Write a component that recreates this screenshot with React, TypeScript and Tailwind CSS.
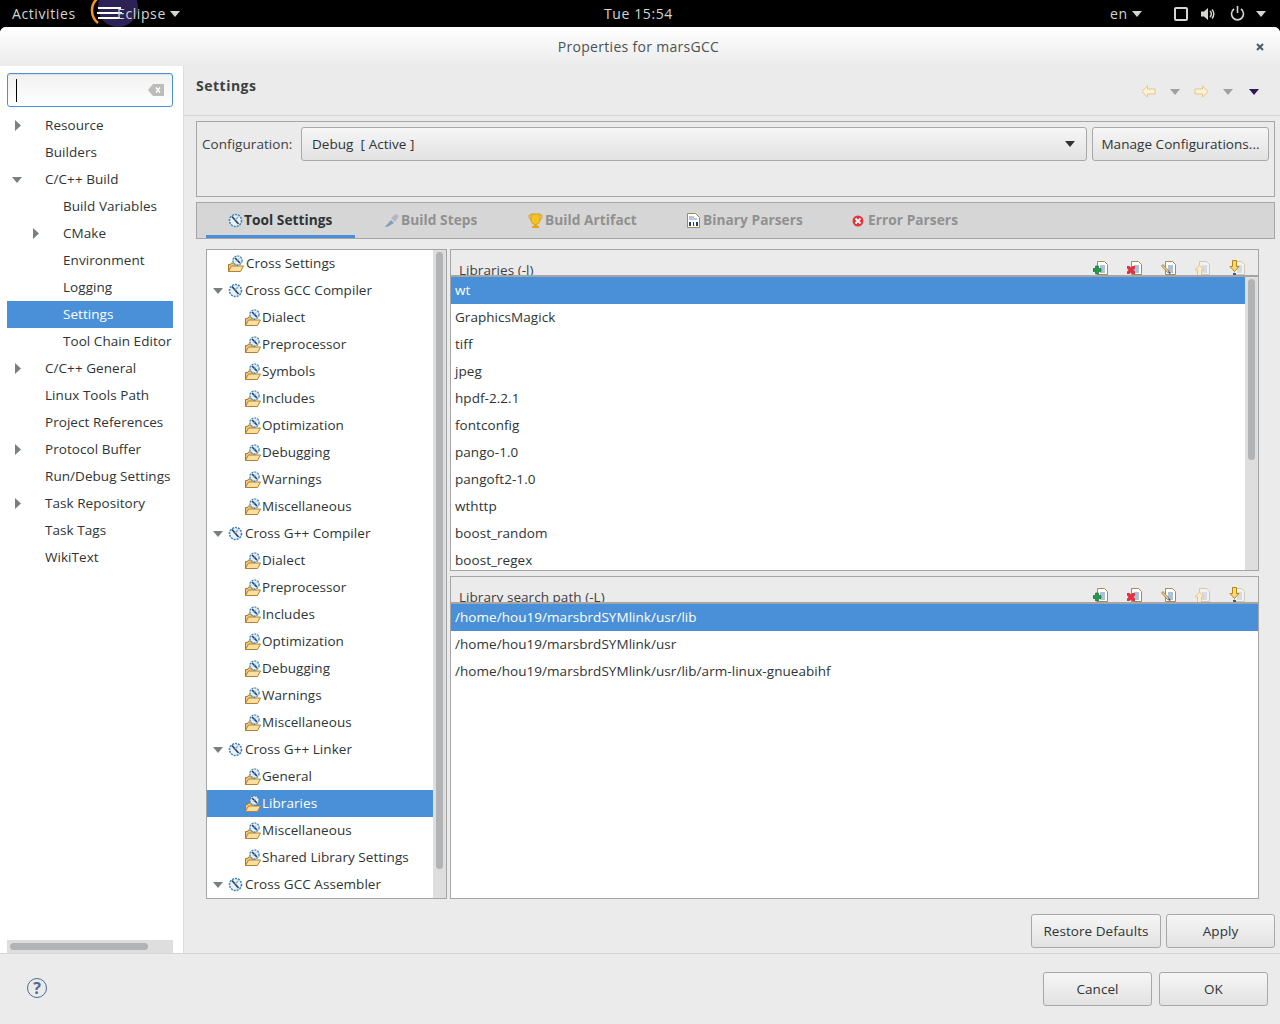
import React from 'react';

const sidebarItems = [
  { label: 'Resource', depth: 0, arrow: 'right' },
  { label: 'Builders', depth: 0 },
  { label: 'C/C++ Build', depth: 0, arrow: 'down' },
  { label: 'Build Variables', depth: 1 },
  { label: 'CMake', depth: 1, arrow: 'right' },
  { label: 'Environment', depth: 1 },
  { label: 'Logging', depth: 1 },
  { label: 'Settings', depth: 1, selected: true },
  { label: 'Tool Chain Editor', depth: 1 },
  { label: 'C/C++ General', depth: 0, arrow: 'right' },
  { label: 'Linux Tools Path', depth: 0 },
  { label: 'Project References', depth: 0 },
  { label: 'Protocol Buffer', depth: 0, arrow: 'right' },
  { label: 'Run/Debug Settings', depth: 0 },
  { label: 'Task Repository', depth: 0, arrow: 'right' },
  { label: 'Task Tags', depth: 0 },
  { label: 'WikiText', depth: 0 },
];

const toolItems = [
  { label: 'Cross Settings', depth: 0, folder: true },
  { label: 'Cross GCC Compiler', depth: 0 },
  { label: 'Dialect', depth: 1 },
  { label: 'Preprocessor', depth: 1 },
  { label: 'Symbols', depth: 1 },
  { label: 'Includes', depth: 1 },
  { label: 'Optimization', depth: 1 },
  { label: 'Debugging', depth: 1 },
  { label: 'Warnings', depth: 1 },
  { label: 'Miscellaneous', depth: 1 },
  { label: 'Cross G++ Compiler', depth: 0 },
  { label: 'Dialect', depth: 1 },
  { label: 'Preprocessor', depth: 1 },
  { label: 'Includes', depth: 1 },
  { label: 'Optimization', depth: 1 },
  { label: 'Debugging', depth: 1 },
  { label: 'Warnings', depth: 1 },
  { label: 'Miscellaneous', depth: 1 },
  { label: 'Cross G++ Linker', depth: 0 },
  { label: 'General', depth: 1 },
  { label: 'Libraries', depth: 1, selected: true },
  { label: 'Miscellaneous', depth: 1 },
  { label: 'Shared Library Settings', depth: 1 },
  { label: 'Cross GCC Assembler', depth: 0 },
];

const libraries = ['wt', 'GraphicsMagick', 'tiff', 'jpeg', 'hpdf-2.2.1', 'fontconfig', 'pango-1.0', 'pangoft2-1.0', 'wthttp', 'boost_random', 'boost_regex'];
const searchPaths = ['/home/hou19/marsbrdSYMlink/usr/lib', '/home/hou19/marsbrdSYMlink/usr', '/home/hou19/marsbrdSYMlink/usr/lib/arm-linux-gnueabihf'];

const Caret = ({ dir, className = '' }: { dir: 'right' | 'down'; className?: string }) =>
  dir === 'right' ? (
    <svg width="6" height="11" viewBox="0 0 6 11" className={className}><path d="M0 0l6 5.500L0 11z" fill="#7a7f80" /></svg>
  ) : (
    <svg width="10" height="6" viewBox="0 0 10 6" className={className}><path d="M0 0h10L5 6z" fill="#7a7f80" /></svg>
  );

const Gear = () => (
  <svg width="15" height="15" viewBox="0 0 15 15">
    <circle cx="7.500" cy="7.500" r="6" fill="#eaf2f8" stroke="#3f86b4" strokeWidth="1.600" strokeDasharray="2 1" />
    <path d="M4 3.500l6.500 7.500" stroke="#25406b" strokeWidth="1.700" />
    <path d="M10 4L7 7" stroke="#8aa9c4" strokeWidth="1.400" />
  </svg>
);

const FolderGear = () => (
  <svg width="16" height="17" viewBox="0 0 16 17">
    <path d="M.5 9.500h2l1-1.500h6v8.500H.5z" fill="#f0c67c" stroke="#a8742a" />
    <path d="M.5 16.500l3-5.500h12l-3 5.500z" fill="#fbdf9f" stroke="#b5802f" />
    <circle cx="9.500" cy="5.500" r="4.600" fill="#e4eef6" stroke="#3f86b4" strokeWidth="1.300" strokeDasharray="2 1" />
    <path d="M7 3l5 5" stroke="#25406b" strokeWidth="1.600" />
    <path d="M8 6.500l3-3" stroke="#8aa9c4" />
  </svg>
);

const DocBase = ({ faded = false }: { faded?: boolean }) => (
  <g opacity={faded ? 0.35 : 1}>
    <path d="M4.500 1.500h7l3 3v10h-10z" fill="#fff" stroke="#a68a4e" />
    <path d="M7 6h5M7 8h5M7 10h5M7 12h5" stroke="#5b83b5" />
  </g>
);

const AddDoc = () => (
  <svg width="16" height="16" viewBox="0 0 16 16">
    <DocBase />
    <path d="M2.500 6h3v2.500H8v3H5.500V14h-3v-2.500H0v-3h2.500z" fill="#1f9a45" stroke="#0f6a2c" strokeWidth=".6" />
  </svg>
);

const DeleteDoc = () => (
  <svg width="16" height="16" viewBox="0 0 16 16">
    <DocBase />
    <path d="M0 6h2.500L4 7.500 5.500 6H8v2.500L6.500 10 8 11.500V14H5.500L4 12.500 2.500 14H0v-2.500L1.500 10 0 8.500z" fill="#e2323f" />
  </svg>
);

const EditDoc = () => (
  <svg width="16" height="16" viewBox="0 0 16 16">
    <DocBase />
    <path d="M.500 6l1.500-1.500 6 6.500-1.500 1.500z" fill="#e9c98a" stroke="#8a6a35" strokeWidth=".7" />
    <path d="M7 13l2-1.500.5 2.500z" fill="#1f3f78" />
  </svg>
);

const UpDoc = () => (
  <svg width="16" height="16" viewBox="0 0 16 16">
    <DocBase faded />
    <path d="M4.500 5l4.500 5H6.500v6h-4v-6H0z" fill="#fdeccb" stroke="#e8c48a" />
  </svg>
);

const DownDoc = () => (
  <svg width="16" height="16" viewBox="0 0 16 16">
    <g transform="translate(1 0)"><DocBase faded /></g>
    <path d="M3.500.500h4v6H10l-4.500 5-4.500-5h2.500z" fill="#fbd96e" stroke="#b5851c" />
    <path d="M4 13h3v3H4z" fill="#2f5f9a" />
  </svg>
);

const listTools = [AddDoc, DeleteDoc, EditDoc, UpDoc, DownDoc];

const NavArrow = ({ flip = false }: { flip?: boolean }) => (
  <svg width="15" height="13" viewBox="0 0 15 13" className={flip ? '-scale-x-100' : ''}>
    <path d="M.8 6.500L6.500 1v3h7.500v5H6.500v3z" fill="#fdf2d8" stroke="#e4c488" />
  </svg>
);

const Button = ({ children, className = '' }: { children: React.ReactNode; className?: string }) => (
  <div className={`flex items-center justify-center rounded-[3px] border border-[#a8a8a8] bg-gradient-to-b from-[#f6f6f6] to-[#e2e2e2] text-[#2e3436] ${className}`}>
    {children}
  </div>
);

const ListToolbar = () => (
  <div className="flex items-center gap-[18px] pr-[13px]">
    {listTools.map((Tool, i) => (
      <Tool key={i} />
    ))}
  </div>
);

const Tab = ({ icon, label, active = false, className = '' }: { icon: React.ReactNode; label: string; active?: boolean; className?: string }) => (
  <div className={`flex h-full items-center border-b-[3px] pt-[3px] text-[13.7px] font-bold ${active ? 'border-[#4a90d9] text-[#2e3436]' : 'border-transparent text-[#8f9191]'} ${className}`}>
    {icon}
    <span>{label}</span>
  </div>
);

export default function App() {
  return (
    <div className="flex h-[1024px] w-[1280px] flex-col overflow-hidden bg-black font-['Open_Sans',sans-serif] text-[13.5px] tracking-[0.05px] text-[#2e3436]">
      {/* shell bar */}
      <div className="relative flex h-[27px] shrink-0 items-center text-[14px] font-medium tracking-[0.6px] text-[#d3d7cf]">
        <span className="ml-[12px] w-[80px]">Activities</span>
        <div className="absolute left-[90px] top-0 h-[27px] w-[50px] overflow-hidden">
          <svg width="50" height="27" viewBox="0 0 50 27">
            <circle cx="28" cy="7" r="20" fill="#2c2255" />
            <path d="M8 -2A16 16 0 0 0 8 23" stroke="#f7941e" strokeWidth="2.500" fill="none" />
            <path d="M8 8h23M7 13h25M8 18h22" stroke="#fff" strokeWidth="1.800" />
          </svg>
        </div>
        <span className="relative ml-[25px] w-[46px] whitespace-nowrap">Eclipse</span>
        <Caret dir="down" className="relative ml-[7px] [&_path]:fill-[#d3d7cf]" />
        <span className="ml-[424px] w-[506px]">Tue 15:54</span>
        <span className="w-[22px]">en</span>
        <Caret dir="down" className="[&_path]:fill-[#d3d7cf]" />
        <div className="ml-[32px] h-[14px] w-[14px] rounded-[2px] border-2 border-[#d3d7cf]" />
        <svg width="16" height="14" viewBox="0 0 16 14" className="ml-[13px]">
          <path d="M0 4.500h3L7 1v12L3 9.500H0z" fill="#d3d7cf" />
          <path d="M9 4a4 4 0 0 1 0 6M11 2.500a6.500 6.500 0 0 1 0 9" stroke="#d3d7cf" strokeWidth="1.500" fill="none" />
        </svg>
        <svg width="15" height="15" viewBox="0 0 15 15" className="ml-[13px]">
          <path d="M4 3a6 6 0 1 0 7 0" stroke="#d3d7cf" strokeWidth="1.600" fill="none" />
          <path d="M7.500 0v7" stroke="#d3d7cf" strokeWidth="1.600" />
        </svg>
        <Caret dir="down" className="ml-[11px] [&_path]:fill-[#d3d7cf]" />
      </div>

      {/* dialog window */}
      <div className="flex flex-1 flex-col overflow-hidden rounded-t-[6px] bg-[#ebebeb]">
        <div className="flex h-[39px] shrink-0 items-center bg-gradient-to-b from-white to-[#ebebeb]">
          <div className="flex-1 pl-[21px] text-center text-[14px] font-medium tracking-[0.3px] text-[#4a5254]">Properties for marsGCC</div>
          <svg width="8" height="8" viewBox="0 0 8 8" className="mr-[16px]"><path d="M1 1l6 6M7 1L1 7" stroke="#4f5b62" strokeWidth="2" /></svg>
        </div>

        <div className="flex min-h-0 flex-1">
          {/* left navigation */}
          <div className="flex w-[184px] shrink-0 flex-col border-r border-[#dcdcdc] bg-white pl-[7px] pr-[10px] pt-[7px]">
            <div className="flex h-[34px] shrink-0 items-center rounded-[3px] border border-[#4a90d9] bg-gradient-to-b from-[#f1f1f1] to-white pl-[8px] pr-[8px] shadow-[inset_0_1px_1px_rgba(0,0,0,0.08)]">
              <div className="h-[23px] w-px bg-black" />
              <svg width="16" height="12" viewBox="0 0 16 12" className="ml-auto">
                <path d="M0 6l5-6h11v12H5z" fill="#bcbcb8" />
                <path d="M8 3.500l4 5M12 3.500l-4 5" stroke="#fff" strokeWidth="1.500" />
              </svg>
            </div>
            <div className="mt-[5px] min-h-0 w-[168px] flex-1 overflow-hidden">
              {sidebarItems.map((item) => (
                <div key={item.label} className={`flex h-[27px] items-center whitespace-nowrap ${item.selected ? 'w-[166px] bg-[#4a90d9] text-white' : ''}`}>
                  <div className={`flex shrink-0 items-center ${item.depth ? 'w-[56px] pl-[26px]' : 'w-[38px] pl-[8px]'}`}>
                    {item.arrow && <Caret dir={item.arrow as 'right' | 'down'} className={item.arrow === 'down' ? '-ml-[3px]' : ''} />}
                  </div>
                  {item.label}
                </div>
              ))}
            </div>
            <div className="flex h-[13px] w-[166px] shrink-0 items-center bg-[#dedede] px-[3px]">
              <div className="h-[7px] w-[138px] rounded-full bg-[#b2b3b4]" />
            </div>
          </div>

          {/* settings page */}
          <div className="flex min-w-0 flex-1 flex-col">
            <div className="flex h-[50px] shrink-0 items-start border-b border-[#d6d6d6] pl-[12px] pr-[21px]">
              <span className="mt-[9px] text-[14px] font-bold tracking-[0.5px] text-[#3b4042]">Settings</span>
              <div className="ml-auto mt-[19px] flex items-center">
                <NavArrow />
                <Caret dir="down" className="ml-[14px] [&_path]:fill-[#a0a0a0]" />
                <div className="ml-[14px] flex"><NavArrow flip /></div>
                <Caret dir="down" className="ml-[14px] [&_path]:fill-[#a0a0a0]" />
                <Caret dir="down" className="ml-[16px] [&_path]:fill-[#2c1a5a]" />
              </div>
            </div>

            <div className="flex min-h-0 flex-1 flex-col pl-[12px] pr-[5px] pt-[5px]">
              <div className="flex h-[76px] shrink-0 items-start border border-[#a5a5a5] pl-[5px] pr-[5px] pt-[5px]">
                <span className="flex h-[34px] w-[99px] shrink-0 items-center text-[#3b4042]">Configuration:</span>
                <Button className="h-[34px] flex-1 !justify-start pl-[10px] pr-[11px]">
                  <span>Debug&nbsp; [ Active ]</span>
                  <Caret dir="down" className="ml-auto [&_path]:fill-[#2e3436]" />
                </Button>
                <Button className="ml-[5px] h-[34px] w-[177px] shrink-0">Manage Configurations...</Button>
              </div>

              <div className="mt-[5px] flex h-[37px] shrink-0 items-stretch border border-[#a5a5a5] bg-[#d6d6d6] pl-[9px]">
                <Tab active className="w-[149px] gap-px pl-[22px]" label="Tool Settings" icon={<Gear />} />
                <Tab className="ml-[29px] w-[144px] gap-px" label="Build Steps" icon={<svg width="16" height="15" viewBox="0 0 16 15"><path d="M1 14l6-7 3 3-7 4z" fill="#7f9fbf" /><path d="M7 5l5-4 3 2-4 6z" fill="#b5b5c5" /></svg>} />
                <Tab className="w-[159px] gap-[2px]" label="Build Artifact" icon={<svg width="15" height="16" viewBox="0 0 15 16"><path d="M3 1h9v6a4.500 4.500 0 0 1-9 0z" fill="#f3c324" stroke="#d99a12" /><path d="M3 2H1v3l2 2M12 2h2v3l-2 2" fill="none" stroke="#e0a818" /><path d="M6 11h3v2h2v2H4v-2h2z" fill="#e0a818" /></svg>} />
                <Tab className="w-[165px] gap-[2px]" label="Binary Parsers" icon={<svg width="14" height="15" viewBox="0 0 14 15"><path d="M.5.500h8l4 4v10H.500z" fill="#fff" stroke="#a08a4e" /><path d="M2 4h5M2 6h8" stroke="#6f8fbf" /><path d="M2 9h2v4H2zM6 9h1v4H6zM9 9h2v4H9z" fill="#1f3f78" /></svg>} />
                <Tab className="gap-[4px]" label="Error Parsers" icon={<svg width="12" height="12" viewBox="0 0 12 12"><circle cx="6" cy="6" r="5.500" fill="#e2343f" /><path d="M3.500 3.500l5 5M8.500 3.500l-5 5" stroke="#fff" strokeWidth="1.800" /></svg>} />
              </div>

              <div className="flex min-h-0 flex-1 pl-[10px] pt-[10px]">
                {/* tool tree */}
                <div className="flex h-[650px] w-[241px] shrink-0 border border-[#a5a5a5] bg-white">
                  <div className="min-w-0 flex-1 overflow-hidden">
                    {toolItems.map((item, i) => (
                      <div key={i} className={`flex h-[27px] items-center whitespace-nowrap ${item.selected ? 'bg-[#4a90d9] text-white' : ''}`}>
                        {item.depth ? (
                          <span className="ml-[38px] mr-px flex"><FolderGear /></span>
                        ) : (
                          <>
                            <span className="ml-[6px] flex w-[15px] shrink-0 items-center">{!item.folder && <Caret dir="down" />}</span>
                            <span className="mr-[2px] flex">{item.folder ? <FolderGear /> : <Gear />}</span>
                          </>
                        )}
                        {item.label}
                      </div>
                    ))}
                  </div>
                  <div className="flex w-[13px] shrink-0 justify-center bg-[#dedede] pt-[2px]">
                    <div className="h-[617px] w-[7px] rounded-full bg-[#b2b3b4]" />
                  </div>
                </div>

                {/* library lists */}
                <div className="ml-[3px] flex h-[650px] w-[809px] shrink-0 flex-col">
                  <div className="flex h-[322px] shrink-0 flex-col overflow-hidden border border-[#a5a5a5] bg-[#ebebeb]">
                    <div className="flex h-[25px] shrink-0 items-end justify-between overflow-hidden pl-[8px]">
                      <span className="relative top-[5px] text-[#3b4042]">Libraries (-l)</span>
                      <div className="relative top-[1px]"><ListToolbar /></div>
                    </div>
                    <div className="flex min-h-0 flex-1 border-t-2 border-[#a5a5a5]">
                      <div className="min-w-0 flex-1 overflow-hidden bg-white">
                        {libraries.map((lib, i) => (
                          <div key={lib} className={`flex h-[27px] items-center pl-[4px] ${i === 0 ? 'bg-[#4a90d9] text-white' : ''}`}>{lib}</div>
                        ))}
                      </div>
                      <div className="flex w-[13px] shrink-0 justify-center bg-[#dedede] pt-[2px]">
                        <div className="h-[181px] w-[7px] rounded-full bg-[#b2b3b4]" />
                      </div>
                    </div>
                  </div>
                  <div className="mt-[5px] flex min-h-0 flex-1 flex-col overflow-hidden border border-[#a5a5a5] bg-[#ebebeb]">
                    <div className="flex h-[25px] shrink-0 items-end justify-between overflow-hidden pl-[8px]">
                      <span className="relative top-[5px] text-[#3b4042]">Library search path (-L)</span>
                      <div className="relative top-[1px]"><ListToolbar /></div>
                    </div>
                    <div className="min-h-0 flex-1 overflow-hidden border-t-2 border-[#a5a5a5] bg-white">
                      {searchPaths.map((p, i) => (
                        <div key={p} className={`flex h-[27px] items-center pl-[4px] ${i === 0 ? 'bg-[#4a90d9] text-white' : ''}`}>{p}</div>
                      ))}
                    </div>
                  </div>
                </div>
              </div>

              <div className="flex h-[54px] shrink-0 items-start justify-end pt-[15px]">
                <Button className="h-[34px] w-[130px]">Restore Defaults</Button>
                <Button className="ml-[5px] h-[34px] w-[109px]">Apply</Button>
              </div>
            </div>
          </div>
        </div>

        {/* footer */}
        <div className="flex h-[71px] shrink-0 items-center border-t border-[#d6d6d6] pl-[27px] pr-[12px]">
          <div className="mb-[3px] flex h-[20px] w-[20px] items-center justify-center rounded-full border border-[#4f6a94] text-[16px] font-bold text-[#4f6a94]">?</div>
          <Button className="ml-auto h-[34px] w-[109px]">Cancel</Button>
          <Button className="ml-[7px] h-[34px] w-[109px]">OK</Button>
        </div>
      </div>
    </div>
  );
}
